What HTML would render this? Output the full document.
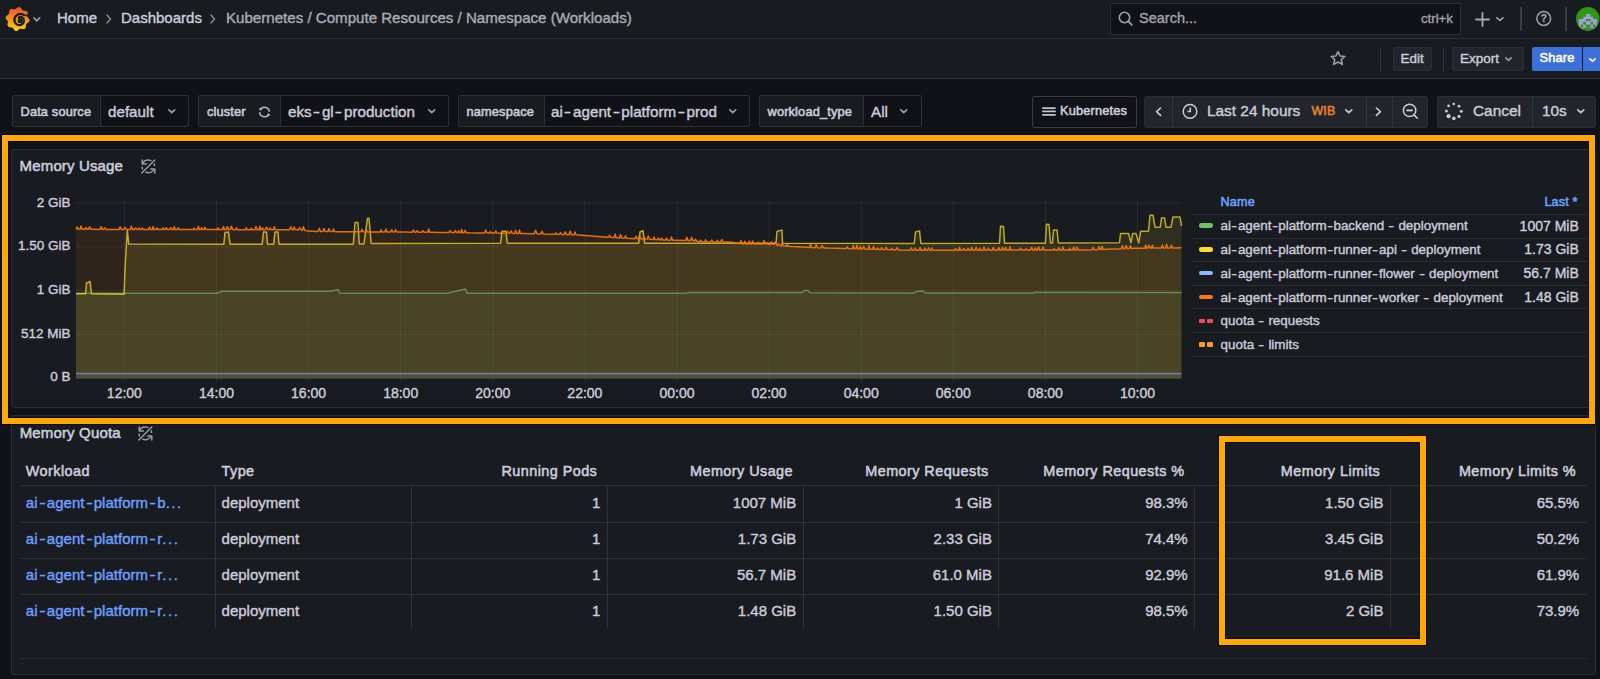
<!DOCTYPE html>
<html><head><meta charset="utf-8">
<style>
*{box-sizing:border-box;margin:0;padding:0}
html,body{width:1600px;height:679px;overflow:hidden;background:#111217;font-family:"Liberation Sans",sans-serif;color:#ccccdc}
.a{position:absolute}
.t{position:absolute;white-space:nowrap;line-height:1;-webkit-text-stroke:0.4px currentColor}
svg{position:absolute;overflow:visible}
.bar{position:absolute;left:0;width:1600px;background:#181b1f}
.var{position:absolute;top:95px;height:32px;border:1px solid #2d3036;border-radius:2px;background:#111217}
.lbl{position:absolute;left:0;top:0;bottom:0;background:#181b1f;border-right:1px solid #2d3036}
.panel{position:absolute;left:11px;width:1585px;background:#181b1f;border:1px solid #2a2d33;border-radius:3px}
.orange{position:absolute;border:6px solid #ffa900;box-shadow:0 0 0 1px rgba(0,4,30,0.6), inset 0 0 0 1px rgba(0,4,30,0.6)}
.t[style*="font-weight:bold"]{-webkit-text-stroke:0}
.t[style*="font-weight:600"]{font-weight:normal !important;-webkit-text-stroke:0.55px currentColor;letter-spacing:0.15px}
.hd{font-weight:bold;font-size:14.3px;color:#ccccdc}
.cell{font-size:15px;color:#ccccdc}
</style></head>
<body>
<!-- top bar -->
<div class="bar" style="top:0;height:39px;border-bottom:1px solid #2b2e34"></div>
<div class="bar" style="top:39px;height:40px;border-bottom:1px solid #2b2e34"></div>
<svg style="left:4px;top:5px" width="28" height="28" viewBox="0 0 28 28">
<defs><linearGradient id="lg" x1="0" y1="0" x2="0" y2="1"><stop offset="0" stop-color="#ee4f2a"/><stop offset="0.55" stop-color="#f7941d"/><stop offset="1" stop-color="#fcd20a"/></linearGradient></defs>
<path fill="url(#lg)" d="M25.14 14.00 L25.39 14.46 L25.55 14.94 L25.60 15.42 L25.54 15.89 L25.37 16.34 L25.09 16.76 L24.74 17.14 L24.32 17.48 L23.88 17.79 L23.45 18.08 L23.05 18.36 L22.70 18.64 L22.43 18.94 L22.22 19.28 L22.08 19.67 L22.00 20.10 L21.95 20.58 L21.91 21.10 L21.85 21.63 L21.76 22.16 L21.61 22.66 L21.38 23.11 L21.08 23.49 L20.71 23.78 L20.27 23.98 L19.78 24.08 L19.25 24.09 L18.72 24.04 L18.19 23.95 L17.68 23.85 L17.20 23.76 L16.76 23.72 L16.35 23.74 L15.96 23.83 L15.59 24.01 L15.22 24.25 L14.85 24.56 L14.46 24.89 L14.04 25.23 L13.60 25.54 L13.14 25.79 L12.66 25.95 L12.18 26.00 L11.71 25.94 L11.26 25.77 L10.84 25.49 L10.46 25.14 L10.12 24.72 L9.81 24.28 L9.52 23.85 L9.24 23.45 L8.96 23.10 L8.66 22.83 L8.32 22.62 L7.93 22.48 L7.50 22.40 L7.02 22.35 L6.50 22.31 L5.97 22.25 L5.44 22.16 L4.94 22.01 L4.49 21.78 L4.11 21.48 L3.82 21.11 L3.62 20.67 L3.52 20.18 L3.51 19.65 L3.56 19.12 L3.65 18.59 L3.75 18.08 L3.84 17.60 L3.88 17.16 L3.86 16.75 L3.77 16.36 L3.59 15.99 L3.35 15.62 L3.04 15.25 L2.71 14.86 L2.37 14.44 L2.06 14.00 L1.81 13.54 L1.65 13.06 L1.60 12.58 L1.66 12.11 L1.83 11.66 L2.11 11.24 L2.46 10.86 L2.88 10.52 L3.32 10.21 L3.75 9.92 L4.15 9.64 L4.50 9.36 L4.77 9.06 L4.98 8.72 L5.12 8.33 L5.20 7.90 L5.25 7.42 L5.29 6.90 L5.35 6.37 L5.44 5.84 L5.59 5.34 L5.82 4.89 L6.12 4.51 L6.49 4.22 L6.93 4.02 L7.42 3.92 L7.95 3.91 L8.48 3.96 L9.01 4.05 L9.52 4.15 L10.00 4.24 L10.44 4.28 L10.85 4.26 L11.24 4.17 L11.61 3.99 L11.98 3.75 L12.35 3.44 L12.74 3.11 L13.16 2.77 L13.60 2.46 L14.06 2.21 L14.54 2.05 L15.02 2.00 L15.49 2.06 L15.94 2.23 L16.36 2.51 L16.74 2.86 L17.08 3.28 L17.39 3.72 L17.68 4.15 L17.96 4.55 L18.24 4.90 L18.54 5.17 L18.88 5.38 L19.27 5.52 L19.70 5.60 L20.18 5.65 L20.70 5.69 L21.23 5.75 L21.76 5.84 L22.26 5.99 L22.71 6.22 L23.09 6.52 L23.38 6.89 L23.58 7.33 L23.68 7.82 L23.69 8.35 L23.64 8.88 L23.55 9.41 L23.45 9.92 L23.36 10.40 L23.32 10.84 L23.34 11.25 L23.43 11.64 L23.61 12.01 L23.85 12.38 L24.16 12.75 L24.49 13.14 L24.83 13.56 Z"/>
<path d="M20.14 10.24 L19.46 9.82 L18.74 9.48 L17.99 9.23 L17.22 9.08 L16.45 9.02 L15.68 9.06 L14.93 9.20 L14.21 9.42 L13.53 9.72 L12.90 10.10 L12.33 10.56 L11.82 11.07 L11.38 11.64 L11.02 12.25 L10.73 12.89 L10.54 13.56 L10.42 14.24 L10.39 14.91 L10.45 15.59 L10.58 16.24 L10.79 16.86 L11.08 17.45 L11.43 17.99 L11.83 18.48 L12.29 18.91 L12.80 19.27 L13.34 19.57 L13.90 19.79 L14.48 19.95 L15.07 20.03 L15.65 20.03 L16.23 19.97 L16.78 19.84 L17.31 19.64 L17.80 19.38 L18.25 19.07 L18.66 18.70 L19.01 18.30 L19.30 17.86 L19.54 17.40 L19.71 16.92 L19.82 16.42 L19.87 15.93 L19.86 15.44 L19.79 14.96 L19.66 14.50 L19.47 14.07 L19.24 13.67 L18.97 13.31 L18.66 12.99 L18.31 12.71 L17.95 12.48 L17.56 12.31 L17.16 12.18 L16.75 12.11 L16.35 12.09 L15.96 12.12 L15.57 12.20 L15.21 12.32 L14.87 12.48" fill="none" stroke="#181b1f" stroke-width="2.3" stroke-linecap="round"/>
<circle cx="16.1" cy="15.700000000000001" r="2.5" fill="#181b1f"/>
<path d="M21.5 9.6 L25.6 12.2" stroke="#181b1f" stroke-width="1.6"/>
</svg>
<svg style="left:33px;top:16.5px" width="7.5" height="4.5"><path d="M0.8 0.8 L3.75 3.9 L6.7 0.8" fill="none" stroke="#9fa0aa" stroke-width="1.6" stroke-linecap="round" stroke-linejoin="round"/></svg>
<div class="t" style="left:57px;top:10.4px;font-size:15px;color:#ccccdc;font-weight:normal;">Home</div>
<svg style="left:106px;top:14px" width="6" height="10"><path d="M1 1 L4.5 5 L1 9" fill="none" stroke="#8e8f99" stroke-width="1.4" stroke-linecap="round"/></svg>
<div class="t" style="left:121px;top:10.4px;font-size:15px;color:#ccccdc;font-weight:normal;">Dashboards</div>
<svg style="left:210px;top:14px" width="6" height="10"><path d="M1 1 L4.5 5 L1 9" fill="none" stroke="#8e8f99" stroke-width="1.4" stroke-linecap="round"/></svg>
<div class="t" style="left:226px;top:10.32px;font-size:15.1px;color:#a9aab6;font-weight:normal;">Kubernetes / Compute Resources / Namespace (Workloads)</div>
<div class="a" style="left:1110px;top:3px;width:351px;height:32px;background:#111217;border:1px solid #2d3036;border-radius:2px"></div>
<svg style="left:1118px;top:11px" width="16" height="16"><circle cx="6.5" cy="6.5" r="5.2" fill="none" stroke="#9fa0aa" stroke-width="1.6"/><path d="M10.3 10.3 L13.8 13.8" stroke="#9fa0aa" stroke-width="1.7" stroke-linecap="round"/></svg>
<div class="t" style="left:1139px;top:10.83px;font-size:14.5px;color:#9fa0aa;font-weight:normal;">Search...</div>
<div class="t" style="left:1421px;top:11.93px;font-size:13.2px;color:#9fa0aa;font-weight:normal;">ctrl+k</div>
<svg style="left:1475px;top:12px" width="15" height="15"><path d="M7.5 1 V14 M1 7.5 H14" stroke="#a9aab6" stroke-width="1.8" stroke-linecap="round"/></svg>
<svg style="left:1496.3px;top:17px" width="7.8" height="4"><path d="M0.8 0.8 L3.9 3.4 L7.0 0.8" fill="none" stroke="#9fa0aa" stroke-width="1.6" stroke-linecap="round" stroke-linejoin="round"/></svg>
<div class="a" style="left:1520.25px;top:7px;width:2px;height:24px;background:#393c43"></div>
<svg style="left:1535px;top:10px" width="18" height="18"><circle cx="8.75" cy="8.5" r="6.9" fill="none" stroke="#9fa0aa" stroke-width="1.5"/><text x="8.75" y="12.2" font-family="Liberation Sans" font-weight="bold" font-size="10" fill="#9fa0aa" stroke="#9fa0aa" stroke-width="0.3" text-anchor="middle">?</text></svg>
<div class="a" style="left:1565.25px;top:7px;width:2px;height:24px;background:#393c43"></div>
<svg style="left:1575.75px;top:7.25px" width="24" height="24" viewBox="0 0 24 24">
<defs><clipPath id="av"><circle cx="11.75" cy="11.75" r="11.75"/></clipPath></defs>
<g clip-path="url(#av)">
<rect x="0" y="0" width="24" height="24" fill="#2c9a0e"/>
<rect x="10" y="7" width="4.5" height="2.9" fill="#a99be6"/>
<rect x="7.25" y="9.75" width="9.75" height="2.4" fill="#a99be6"/>
<rect x="2.75" y="12" width="18" height="2.9" fill="#a99be6"/>
<rect x="10" y="12" width="4.5" height="1.9" fill="#2c9a0e"/>
<rect x="2.75" y="14.75" width="18" height="3.1" fill="#a99be6"/>
<rect x="7.25" y="14.75" width="2.75" height="3" fill="#2c9a0e"/>
<rect x="14.5" y="14.75" width="2.5" height="3" fill="#2c9a0e"/>
<rect x="2.75" y="17.75" width="18" height="3.1" fill="#a99be6"/>
<rect x="4.5" y="17.75" width="2.75" height="3" fill="#2c9a0e"/>
<rect x="10" y="17.75" width="4.5" height="3" fill="#2c9a0e"/>
<rect x="17" y="17.75" width="2.75" height="3" fill="#2c9a0e"/>
<rect x="2.75" y="20.75" width="20" height="4" fill="#a99be6"/>
<rect x="7.25" y="20.75" width="9.75" height="4" fill="#2c9a0e"/>
<rect x="2.5" y="0.25" width="1.75" height="2.25" fill="#a99be6"/>
<rect x="18" y="0.25" width="1.75" height="2.25" fill="#a99be6"/>
</g></svg>
<svg style="left:1329px;top:50px" width="18" height="17" viewBox="0 0 18 17"><path d="M9 1.6 L11.1 6 L15.8 6.5 L12.3 9.7 L13.3 14.4 L9 12 L4.7 14.4 L5.7 9.7 L2.2 6.5 L6.9 6 Z" fill="none" stroke="#9fa0aa" stroke-width="1.6" stroke-linejoin="round"/></svg>
<div class="a" style="left:1380px;top:47px;width:1.2px;height:24px;background:#33363c"></div>
<div class="a" style="left:1393px;top:47px;width:39px;height:24px;background:#22252b;border:1px solid #2a2d33;border-radius:2px"></div>
<div class="t" style="left:1400.5px;top:51.87px;font-size:13.5px;color:#ccccdc;font-weight:normal;">Edit</div>
<div class="a" style="left:1443px;top:47px;width:1.2px;height:24px;background:#33363c"></div>
<div class="a" style="left:1452px;top:47px;width:72px;height:24px;background:#22252b;border:1px solid #2a2d33;border-radius:2px"></div>
<div class="t" style="left:1460px;top:51.87px;font-size:13.5px;color:#ccccdc;font-weight:normal;">Export</div>
<svg style="left:1505px;top:57px" width="7" height="4"><path d="M0.8 0.8 L3.5 3.4 L6.2 0.8" fill="none" stroke="#9fa0aa" stroke-width="1.6" stroke-linecap="round" stroke-linejoin="round"/></svg>
<div class="a" style="left:1532px;top:47px;width:50px;height:24px;background:#3d71d9;border-radius:2px 0 0 2px"></div>
<div class="a" style="left:1583px;top:47px;width:17px;height:24px;background:#3d71d9"></div>
<div class="t" style="left:1539.5px;top:52.46px;font-size:12.8px;color:#ffffff;font-weight:600;">Share</div>
<svg style="left:1589px;top:57.5px" width="7" height="3.8"><path d="M0.8 0.8 L3.5 3.1999999999999997 L6.2 0.8" fill="none" stroke="#ffffff" stroke-width="1.6" stroke-linecap="round" stroke-linejoin="round"/></svg>
<div class="var" style="left:11.5px;width:177px"><div class="lbl" style="width:88.5px"></div></div><div class="t" style="left:20.5px;top:105.66px;font-size:12.8px;color:#ccccdc;font-weight:600;">Data source</div><div class="t" style="left:108px;top:103.53px;font-size:15.2px;color:#ccccdc;font-weight:normal;">default</div><svg style="left:167.5px;top:109px" width="7.5" height="4.2"><path d="M0.8 0.8 L3.75 3.6 L6.7 0.8" fill="none" stroke="#9fa0aa" stroke-width="1.6" stroke-linecap="round" stroke-linejoin="round"/></svg>
<div class="var" style="left:198px;width:250.5px"><div class="lbl" style="width:82px"></div></div><div class="t" style="left:207px;top:105.66px;font-size:12.8px;color:#ccccdc;font-weight:600;">cluster</div><svg style="left:258px;top:106px" width="13" height="12" viewBox="0 0 13 12"><path d="M2.72 3.04 A4.8 4.8 0 0 1 11.30 5.83" fill="none" stroke="#b5b6c2" stroke-width="1.5"/><path d="M10.28 8.96 A4.8 4.8 0 0 1 1.70 6.17" fill="none" stroke="#b5b6c2" stroke-width="1.5"/><circle cx="2.6" cy="3.1" r="1.4" fill="#b5b6c2"/><circle cx="10.4" cy="8.9" r="1.4" fill="#b5b6c2"/></svg><div class="t" style="left:288px;top:103.53px;font-size:15.2px;color:#ccccdc;font-weight:normal;">eks<span style="display:inline-block;transform:scaleX(1.45);margin:0 2.6px">-</span>gl<span style="display:inline-block;transform:scaleX(1.45);margin:0 2.6px">-</span>production</div><svg style="left:427.5px;top:109px" width="7.5" height="4.2"><path d="M0.8 0.8 L3.75 3.6 L6.7 0.8" fill="none" stroke="#9fa0aa" stroke-width="1.6" stroke-linecap="round" stroke-linejoin="round"/></svg>
<div class="var" style="left:457.5px;width:292.5px"><div class="lbl" style="width:86.5px"></div></div><div class="t" style="left:466.5px;top:105.66px;font-size:12.8px;color:#ccccdc;font-weight:600;">namespace</div><div class="t" style="left:551px;top:103.53px;font-size:15.2px;color:#ccccdc;font-weight:normal;">ai<span style="display:inline-block;transform:scaleX(1.45);margin:0 2.6px">-</span>agent<span style="display:inline-block;transform:scaleX(1.45);margin:0 2.6px">-</span>platform<span style="display:inline-block;transform:scaleX(1.45);margin:0 2.6px">-</span>prod</div><svg style="left:729px;top:109px" width="7.5" height="4.2"><path d="M0.8 0.8 L3.75 3.6 L6.7 0.8" fill="none" stroke="#9fa0aa" stroke-width="1.6" stroke-linecap="round" stroke-linejoin="round"/></svg>
<div class="var" style="left:758.5px;width:163.5px"><div class="lbl" style="width:104.5px"></div></div><div class="t" style="left:767.5px;top:105.66px;font-size:12.8px;color:#ccccdc;font-weight:600;">workload_type</div><div class="t" style="left:871px;top:103.53px;font-size:15.2px;color:#ccccdc;font-weight:normal;">All</div><svg style="left:900px;top:109px" width="7.5" height="4.2"><path d="M0.8 0.8 L3.75 3.6 L6.7 0.8" fill="none" stroke="#9fa0aa" stroke-width="1.6" stroke-linecap="round" stroke-linejoin="round"/></svg>
<div class="a" style="left:1031.5px;top:95.5px;width:105.5px;height:32px;border:1px solid #3a3d44;border-radius:2px;background:#111217"></div>
<svg style="left:1041.5px;top:107px" width="14" height="9"><path d="M0.9 1.1 H13.1 M0.9 4.4 H13.1 M0.9 7.8 H13.1" stroke="#c4c4d2" stroke-width="1.7" stroke-linecap="round"/></svg>
<div class="t" style="left:1060px;top:105.16px;font-size:12.8px;color:#ccccdc;font-weight:600;">Kubernetes</div>
<div class="a" style="left:1144px;top:95.5px;width:284px;height:32px;background:#22252b;border:1px solid #2a2d33;border-radius:2px"></div>
<div class="a" style="left:1172px;top:96px;width:1px;height:31px;background:#33363c"></div>
<div class="a" style="left:1365.5px;top:96px;width:1px;height:31px;background:#33363c"></div>
<div class="a" style="left:1392px;top:96px;width:1px;height:31px;background:#33363c"></div>
<svg style="left:1155px;top:107px" width="7" height="10"><path d="M5.6 1 L1.6 4.7 L5.6 8.4" fill="none" stroke="#ccccdc" stroke-width="1.6" stroke-linecap="round" stroke-linejoin="round"/></svg>
<svg style="left:1182px;top:103px" width="17" height="17"><circle cx="8" cy="8.4" r="6.8" fill="none" stroke="#ccccdc" stroke-width="1.5"/><path d="M8.3 4.5 V8.5 H5.4" fill="none" stroke="#ccccdc" stroke-width="1.5"/></svg>
<div class="t" style="left:1207px;top:102.56px;font-size:15.4px;color:#ccccdc;font-weight:normal;">Last 24 hours</div>
<div class="t" style="left:1311.5px;top:104.9px;font-size:12.4px;color:#e8832a;font-weight:600;">WIB</div>
<svg style="left:1344.5px;top:109px" width="7.6" height="4.2"><path d="M0.8 0.8 L3.8 3.6 L6.8 0.8" fill="none" stroke="#ccccdc" stroke-width="1.6" stroke-linecap="round" stroke-linejoin="round"/></svg>
<svg style="left:1375px;top:107px" width="7" height="10"><path d="M1.4 1 L5.4 4.7 L1.4 8.4" fill="none" stroke="#ccccdc" stroke-width="1.6" stroke-linecap="round" stroke-linejoin="round"/></svg>
<svg style="left:1401px;top:102px" width="18" height="18"><circle cx="8.6" cy="8.4" r="6.2" fill="none" stroke="#ccccdc" stroke-width="1.5"/><path d="M5.4 8.4 H11.8" stroke="#ccccdc" stroke-width="1.9"/><path d="M13 12.9 L16.3 16.2" stroke="#ccccdc" stroke-width="1.6" stroke-linecap="round"/></svg>
<div class="a" style="left:1436.5px;top:95.5px;width:159.5px;height:32px;background:#22252b;border:1px solid #2a2d33;border-radius:2px"></div>
<div class="a" style="left:1531.5px;top:96px;width:1px;height:31px;background:#33363c"></div>
<svg style="left:1440px;top:100px" width="26" height="24"><circle cx="13.75" cy="4.0" r="1.3" fill="#c8c8d6"/><circle cx="19" cy="6.200000000000003" r="1.4" fill="#c8c8d6"/><circle cx="21.299999999999955" cy="11.299999999999997" r="1.5" fill="#c8c8d6"/><circle cx="19" cy="16.400000000000006" r="1.6" fill="#c8c8d6"/><circle cx="13.900000000000091" cy="18.400000000000006" r="1.8" fill="#c8c8d6"/><circle cx="8.599999999999909" cy="16.200000000000003" r="2.1" fill="#c8c8d6"/><circle cx="6.400000000000091" cy="11.099999999999994" r="1.5" fill="#c8c8d6"/><circle cx="8.599999999999909" cy="5.900000000000006" r="1.4" fill="#c8c8d6"/></svg>
<div class="t" style="left:1473px;top:102.56px;font-size:15.4px;color:#ccccdc;font-weight:normal;">Cancel</div>
<div class="t" style="left:1542px;top:102.56px;font-size:15.4px;color:#ccccdc;font-weight:normal;">10s</div>
<svg style="left:1576.5px;top:109px" width="7.6" height="4.2"><path d="M0.8 0.8 L3.8 3.6 L6.8 0.8" fill="none" stroke="#ccccdc" stroke-width="1.6" stroke-linecap="round" stroke-linejoin="round"/></svg>
<div class="panel" style="top:149px;height:258.5px"></div>
<div class="panel" style="top:415px;height:260px"></div>
<div class="t" style="left:19.6px;top:158.3px;font-size:15px;color:#ccccdc;font-weight:600;">Memory Usage</div>
<svg style="left:140.8px;top:158.5px" width="15" height="15" viewBox="0 0 15 15">
<path d="M1.59 4.64 A6.3 6.3 0 0 1 13.59 6.97" fill="none" stroke="#9a9ba6" stroke-width="1.5"/>
<path d="M13.01 9.96 A6.3 6.3 0 0 1 1.01 7.63" fill="none" stroke="#9a9ba6" stroke-width="1.5"/>
<path d="M1.2 0.9 V5.0 H5.4" fill="none" stroke="#9a9ba6" stroke-width="1.5" stroke-linecap="round" stroke-linejoin="round"/>
<path d="M13.8 14.1 V10 H9.6" fill="none" stroke="#9a9ba6" stroke-width="1.5" stroke-linecap="round" stroke-linejoin="round"/>
<path d="M0.8 14 L13.8 1" stroke="#181b1f" stroke-width="3.6"/><path d="M0.8 14 L13.8 1" stroke="#9a9ba6" stroke-width="1.5" stroke-linecap="round"/>
</svg>
<svg style="left:0;top:0" width="1600" height="679"><path d="M76.0 203.00 H1181.5" stroke="rgba(204,204,220,0.09)" stroke-width="1"/><path d="M76.0 246.88 H1181.5" stroke="rgba(204,204,220,0.09)" stroke-width="1"/><path d="M76.0 290.75 H1181.5" stroke="rgba(204,204,220,0.09)" stroke-width="1"/><path d="M76.0 334.62 H1181.5" stroke="rgba(204,204,220,0.09)" stroke-width="1"/><path d="M76.0 378.50 H1181.5" stroke="rgba(204,204,220,0.09)" stroke-width="1"/><path d="M124.40 199 V382" stroke="rgba(204,204,220,0.09)" stroke-width="1"/><path d="M216.50 199 V382" stroke="rgba(204,204,220,0.09)" stroke-width="1"/><path d="M308.60 199 V382" stroke="rgba(204,204,220,0.09)" stroke-width="1"/><path d="M400.70 199 V382" stroke="rgba(204,204,220,0.09)" stroke-width="1"/><path d="M492.80 199 V382" stroke="rgba(204,204,220,0.09)" stroke-width="1"/><path d="M584.90 199 V382" stroke="rgba(204,204,220,0.09)" stroke-width="1"/><path d="M677.00 199 V382" stroke="rgba(204,204,220,0.09)" stroke-width="1"/><path d="M769.10 199 V382" stroke="rgba(204,204,220,0.09)" stroke-width="1"/><path d="M861.20 199 V382" stroke="rgba(204,204,220,0.09)" stroke-width="1"/><path d="M953.30 199 V382" stroke="rgba(204,204,220,0.09)" stroke-width="1"/><path d="M1045.40 199 V382" stroke="rgba(204,204,220,0.09)" stroke-width="1"/><path d="M1137.50 199 V382" stroke="rgba(204,204,220,0.09)" stroke-width="1"/><path d="M76.0 229.3 L77.2 226.9 L78.5 229.3 L80.0 229.3 L81.1 226.1 L82.1 229.3 L84.9 229.3 L86.0 227.5 L87.0 229.3 L88.4 229.3 L89.7 226.7 L90.9 229.3 L93.8 229.3 L100.0 229.4 L101.2 226.6 L102.4 229.4 L103.6 229.4 L104.8 227.9 L106.1 229.4 L108.9 229.4 L114.5 229.4 L119.0 229.4 L120.2 226.9 L121.3 229.4 L123.7 229.4 L125.0 227.4 L126.3 229.4 L130.3 229.4 L131.4 226.2 L132.6 229.4 L134.5 229.4 L135.6 228.0 L136.7 229.4 L138.0 229.4 L139.0 227.8 L139.9 229.4 L141.1 229.4 L142.2 228.0 L143.4 229.4 L145.0 229.5 L148.4 229.5 L149.5 227.1 L150.6 229.5 L152.2 229.5 L153.2 226.6 L154.1 229.5 L156.1 229.5 L157.1 228.0 L158.1 229.5 L161.9 229.5 L163.0 227.8 L164.2 229.5 L165.2 229.5 L166.3 227.7 L167.4 229.5 L169.7 229.5 L170.9 227.7 L172.0 229.5 L173.4 229.5 L174.3 226.7 L175.1 229.5 L177.4 229.5 L178.3 227.7 L179.3 229.5 L183.2 229.5 L188.6 229.6 L193.3 229.6 L194.2 228.1 L195.0 229.6 L197.4 229.6 L198.4 226.3 L199.4 229.6 L200.6 229.6 L201.7 227.7 L202.8 229.6 L203.9 229.6 L205.0 227.4 L206.1 229.6 L207.5 229.6 L217.1 229.6 L218.0 227.8 L218.9 229.6 L222.6 229.6 L223.5 226.4 L224.5 229.6 L226.0 229.6 L227.3 226.6 L228.6 229.6 L230.2 229.6 L231.4 226.2 L232.6 229.6 L235.4 229.7 L236.5 228.0 L237.6 229.7 L239.3 229.7 L245.5 229.7 L246.3 227.6 L247.2 229.7 L250.4 229.7 L251.3 228.1 L252.2 229.7 L254.9 229.7 L256.0 226.4 L257.1 229.7 L259.0 229.7 L259.9 226.3 L260.8 229.7 L261.8 229.7 L262.6 227.8 L263.5 229.7 L265.3 229.7 L266.6 227.2 L267.9 229.7 L269.2 229.7 L270.2 228.0 L271.2 229.7 L273.2 229.7 L274.3 226.7 L275.3 229.7 L279.2 229.8 L289.5 229.8 L290.8 226.8 L292.1 229.8 L293.2 229.8 L294.2 227.0 L295.3 229.8 L298.4 229.8 L299.7 227.7 L301.0 229.8 L302.3 230.2 L303.4 226.8 L304.6 230.2 L307.7 231.1 L318.0 231.6 L319.3 228.2 L320.5 231.6 L322.8 231.6 L324.0 228.4 L325.2 231.6 L327.9 231.6 L328.9 228.8 L329.9 231.6 L332.7 231.6 L333.5 228.9 L334.4 231.6 L337.3 231.7 L347.3 231.7 L353.4 231.8 L361.1 231.8 L362.1 229.3 L363.2 231.8 L365.1 231.9 L366.3 229.9 L367.4 231.9 L369.9 231.9 L380.3 231.9 L381.1 229.7 L382.0 231.9 L384.8 232.0 L385.9 229.1 L386.9 232.0 L390.6 232.0 L391.7 229.9 L392.8 232.0 L394.4 232.0 L395.6 229.7 L396.8 232.0 L400.6 232.1 L406.6 232.1 L412.2 232.2 L413.4 230.0 L414.7 232.2 L415.8 232.2 L417.1 230.6 L418.4 232.2 L421.8 232.2 L422.9 230.6 L423.9 232.2 L427.7 232.3 L428.7 229.0 L429.7 232.3 L432.2 232.3 L441.0 232.4 L449.0 232.5 L450.1 230.5 L451.2 232.5 L454.2 232.6 L455.4 230.5 L456.6 232.6 L457.7 232.6 L458.7 230.9 L459.7 232.6 L460.8 232.7 L461.7 229.4 L462.6 232.7 L464.0 232.7 L465.2 230.3 L466.3 232.7 L469.2 232.8 L479.9 232.9 L484.5 233.0 L485.7 230.0 L486.9 233.0 L489.5 233.0 L490.4 231.6 L491.3 233.0 L494.6 233.1 L495.8 230.9 L497.0 233.1 L500.7 233.2 L502.0 231.6 L503.3 233.2 L506.4 233.3 L507.7 231.4 L508.9 233.3 L509.9 233.3 L511.1 230.7 L512.2 233.3 L514.7 233.4 L515.7 230.2 L516.6 233.4 L518.6 233.4 L519.5 229.9 L520.3 233.4 L523.9 233.5 L534.3 233.7 L535.6 230.3 L536.9 233.7 L540.8 233.9 L542.0 231.3 L543.2 233.9 L545.2 234.1 L555.0 234.3 L556.0 232.9 L557.0 234.3 L559.2 234.4 L560.5 232.6 L561.7 234.4 L564.0 234.6 L565.2 231.7 L566.5 234.6 L568.9 234.7 L570.2 231.1 L571.4 234.7 L574.0 234.8 L575.0 231.9 L576.0 234.8 L579.6 235.0 L588.2 235.7 L594.7 236.2 L604.3 237.0 L608.6 237.3 L609.6 235.2 L610.6 237.3 L614.2 237.6 L615.1 234.2 L616.0 237.6 L619.5 238.0 L620.6 234.4 L621.6 238.0 L624.4 238.2 L625.5 235.7 L626.6 238.2 L627.7 238.3 L634.8 238.7 L635.9 236.2 L637.1 238.7 L638.3 238.8 L639.5 235.4 L640.7 238.8 L642.9 239.1 L643.9 237.1 L645.0 239.1 L647.0 239.3 L648.3 235.9 L649.5 239.3 L653.3 239.6 L654.1 237.1 L655.0 239.6 L657.3 239.8 L658.4 238.2 L659.6 239.8 L660.7 240.0 L661.6 238.2 L662.5 240.0 L665.6 240.1 L666.6 238.0 L667.5 240.1 L670.4 240.2 L671.5 236.9 L672.6 240.2 L675.8 240.3 L685.8 240.5 L686.9 237.3 L688.0 240.5 L690.6 240.6 L691.7 237.3 L692.8 240.6 L694.4 241.0 L695.5 239.1 L696.6 241.0 L699.3 241.9 L700.6 240.2 L701.8 241.9 L704.7 241.9 L705.7 239.8 L706.6 241.9 L710.4 241.9 L711.7 240.1 L713.0 241.9 L716.7 242.0 L717.5 240.3 L718.4 242.0 L720.5 242.0 L721.8 239.6 L723.1 242.0 L725.7 242.0 L730.3 242.0 L739.7 243.8 L741.0 240.4 L742.3 243.8 L743.6 243.9 L744.8 241.3 L746.0 243.9 L748.5 243.9 L749.4 241.0 L750.3 243.9 L751.5 244.0 L752.6 240.9 L753.7 244.0 L757.4 244.0 L758.3 242.2 L759.2 244.0 L762.7 244.1 L764.0 240.5 L765.3 244.1 L766.5 244.2 L767.4 242.6 L768.2 244.2 L770.4 244.2 L771.4 241.9 L772.4 244.2 L774.0 244.3 L775.1 242.1 L776.2 244.3 L777.4 245.3 L778.4 243.5 L779.4 245.3 L781.4 245.8 L782.3 243.1 L783.1 245.8 L786.5 246.2 L787.4 244.1 L788.2 246.2 L791.7 246.5 L802.0 247.1 L809.6 247.4 L810.5 244.3 L811.4 247.4 L815.1 247.7 L816.3 244.7 L817.5 247.7 L821.0 247.9 L822.2 245.6 L823.5 247.9 L827.1 248.1 L836.2 248.3 L842.5 248.4 L846.1 248.5 L847.3 246.9 L848.5 248.5 L852.5 248.7 L853.3 245.3 L854.2 248.7 L856.0 248.8 L856.9 245.3 L857.9 248.8 L859.5 248.9 L860.4 246.6 L861.3 248.9 L862.5 249.0 L863.7 246.2 L864.8 249.0 L868.1 249.2 L868.9 245.6 L869.7 249.2 L872.6 249.3 L873.5 246.3 L874.4 249.3 L876.7 249.4 L877.6 247.9 L878.5 249.4 L880.6 249.5 L881.5 247.5 L882.5 249.5 L885.1 249.6 L886.2 247.3 L887.3 249.6 L890.8 249.8 L891.8 248.2 L892.8 249.8 L895.8 249.9 L897.0 247.7 L898.3 249.9 L900.5 250.1 L910.3 250.2 L911.4 247.9 L912.4 250.2 L914.3 250.2 L915.2 248.0 L916.2 250.2 L919.1 250.2 L920.1 247.6 L921.0 250.2 L924.2 250.2 L925.0 248.1 L925.8 250.2 L927.5 250.2 L928.6 247.9 L929.8 250.2 L930.9 250.2 L931.9 248.1 L932.9 250.2 L935.7 250.2 L941.2 250.2 L946.0 250.2 L951.0 250.2 L954.4 250.2 L955.7 248.5 L957.0 250.2 L958.7 250.2 L959.5 247.2 L960.3 250.2 L962.6 250.2 L963.8 248.5 L965.1 250.2 L967.1 250.2 L968.1 248.4 L969.1 250.2 L970.5 250.2 L971.7 247.4 L972.8 250.2 L974.9 250.2 L976.1 247.1 L977.3 250.2 L978.7 250.2 L979.6 248.1 L980.4 250.2 L982.9 250.2 L984.0 247.0 L985.1 250.2 L987.2 250.2 L988.3 248.2 L989.5 250.2 L992.2 250.2 L993.3 247.4 L994.4 250.2 L997.7 250.1 L998.8 247.6 L999.9 250.1 L1001.5 250.1 L1002.6 247.2 L1003.7 250.1 L1004.8 250.1 L1005.6 247.4 L1006.5 250.1 L1009.1 250.1 L1010.0 246.7 L1010.8 250.1 L1012.5 250.1 L1019.4 250.1 L1020.6 248.0 L1021.8 250.1 L1025.3 250.1 L1026.1 248.6 L1027.0 250.1 L1030.4 250.1 L1031.6 247.4 L1032.8 250.1 L1034.4 250.1 L1035.3 247.9 L1036.2 250.1 L1037.6 250.1 L1038.7 246.9 L1039.8 250.1 L1041.7 250.1 L1042.9 247.1 L1044.1 250.1 L1045.7 250.1 L1053.3 250.1 L1054.2 248.5 L1055.0 250.1 L1057.7 250.1 L1058.9 247.6 L1060.0 250.1 L1061.9 250.1 L1062.7 247.0 L1063.6 250.1 L1065.2 250.1 L1068.9 250.1 L1069.7 248.1 L1070.6 250.1 L1072.7 250.1 L1073.7 247.1 L1074.7 250.1 L1076.0 250.1 L1077.1 247.1 L1078.2 250.1 L1081.9 250.0 L1092.2 249.7 L1093.1 247.3 L1094.1 249.7 L1098.0 249.5 L1099.0 246.5 L1100.1 249.5 L1101.3 249.4 L1102.1 246.2 L1103.0 249.4 L1106.0 249.3 L1115.4 249.0 L1121.3 248.8 L1122.4 245.6 L1123.5 248.8 L1125.0 248.7 L1126.2 245.6 L1127.5 248.7 L1129.3 248.5 L1130.4 245.9 L1131.5 248.5 L1135.4 248.3 L1144.8 248.2 L1145.7 245.0 L1146.5 248.2 L1147.7 248.1 L1149.0 245.1 L1150.2 248.1 L1151.5 248.1 L1152.4 245.3 L1153.2 248.1 L1156.5 248.0 L1161.4 248.0 L1162.4 244.9 L1163.4 248.0 L1165.5 248.0 L1166.6 244.4 L1167.7 248.0 L1170.2 247.9 L1171.4 245.3 L1172.5 247.9 L1175.7 247.9 L1181.5 247.8 L1181.5 378.5 L76.0 378.5 Z" fill="#ff780a" fill-opacity="0.1"/><path d="M76.0 293.8 L85.6 293.8 L86.5 283.0 L88.0 282.5 L90.0 281.4 L91.5 293.8 L124.1 294.2 L125.1 267.1 L127.3 230.6 L128.8 244.1 L223.8 244.2 L225.0 232.5 L228.5 231.9 L230.0 244.2 L262.2 244.2 L263.5 232.0 L266.5 232.0 L267.5 244.2 L273.7 244.2 L275.0 232.0 L278.0 232.0 L279.0 244.2 L353.3 244.2 L355.0 222.6 L358.0 222.6 L359.3 244.0 L363.9 244.0 L367.5 218.2 L369.0 218.2 L371.2 243.5 L500.6 243.2 L502.0 231.2 L506.0 231.2 L507.3 243.2 L638.7 243.2 L640.0 232.0 L643.0 230.6 L644.7 243.2 L776.0 243.2 L777.0 231.5 L782.0 229.9 L782.5 243.2 L914.3 243.4 L915.5 232.0 L919.5 230.9 L920.9 243.4 L999.5 243.2 L1000.5 226.2 L1003.5 226.5 L1004.6 243.2 L1045.4 243.2 L1046.5 224.3 L1049.0 224.5 L1050.5 243.0 L1052.5 243.0 L1053.5 230.0 L1057.0 229.9 L1058.4 243.0 L1119.5 242.7 L1120.5 233.6 L1128.6 233.6 L1131.0 242.7 L1132.7 233.6 L1136.0 233.6 L1138.8 242.7 L1140.7 231.2 L1148.5 231.2 L1150.0 215.2 L1153.0 215.2 L1155.0 227.2 L1160.3 227.2 L1161.5 218.0 L1164.6 218.0 L1166.0 227.2 L1171.0 227.2 L1173.0 217.0 L1180.0 217.0 L1181.5 226.0 L1181.5 378.5 L76.0 378.5 Z" fill="#fade2a" fill-opacity="0.1"/><path d="M76.0 293.3 L217.0 293.3 L222.0 291.2 L330.7 291.2 L338.0 289.6 L340.0 293.3 L446.9 293.3 L465.5 288.9 L467.0 293.3 L686.6 293.3 L688.0 292.5 L802.6 292.5 L804.0 290.6 L808.0 290.6 L810.0 292.8 L914.0 293.1 L916.0 291.5 L923.0 291.0 L925.0 293.1 L1033.0 293.1 L1034.0 292.3 L1181.5 292.4 L1181.5 378.5 L76.0 378.5 Z" fill="#73bf69" fill-opacity="0.1"/><path d="M76.0 373.6 L1181.5 373.6 L1181.5 378.5 L76.0 378.5 Z" fill="#8ab8ff" fill-opacity="0.1"/><path d="M76.0 293.3 L217.0 293.3 L222.0 291.2 L330.7 291.2 L338.0 289.6 L340.0 293.3 L446.9 293.3 L465.5 288.9 L467.0 293.3 L686.6 293.3 L688.0 292.5 L802.6 292.5 L804.0 290.6 L808.0 290.6 L810.0 292.8 L914.0 293.1 L916.0 291.5 L923.0 291.0 L925.0 293.1 L1033.0 293.1 L1034.0 292.3 L1181.5 292.4" fill="none" stroke="#73bf69" stroke-opacity="0.62" stroke-width="1.5" stroke-linejoin="round"/><path d="M76.0 293.8 L85.6 293.8 L86.5 283.0 L88.0 282.5 L90.0 281.4 L91.5 293.8 L124.1 294.2 L125.1 267.1 L127.3 230.6 L128.8 244.1 L223.8 244.2 L225.0 232.5 L228.5 231.9 L230.0 244.2 L262.2 244.2 L263.5 232.0 L266.5 232.0 L267.5 244.2 L273.7 244.2 L275.0 232.0 L278.0 232.0 L279.0 244.2 L353.3 244.2 L355.0 222.6 L358.0 222.6 L359.3 244.0 L363.9 244.0 L367.5 218.2 L369.0 218.2 L371.2 243.5 L500.6 243.2 L502.0 231.2 L506.0 231.2 L507.3 243.2 L638.7 243.2 L640.0 232.0 L643.0 230.6 L644.7 243.2 L776.0 243.2 L777.0 231.5 L782.0 229.9 L782.5 243.2 L914.3 243.4 L915.5 232.0 L919.5 230.9 L920.9 243.4 L999.5 243.2 L1000.5 226.2 L1003.5 226.5 L1004.6 243.2 L1045.4 243.2 L1046.5 224.3 L1049.0 224.5 L1050.5 243.0 L1052.5 243.0 L1053.5 230.0 L1057.0 229.9 L1058.4 243.0 L1119.5 242.7 L1120.5 233.6 L1128.6 233.6 L1131.0 242.7 L1132.7 233.6 L1136.0 233.6 L1138.8 242.7 L1140.7 231.2 L1148.5 231.2 L1150.0 215.2 L1153.0 215.2 L1155.0 227.2 L1160.3 227.2 L1161.5 218.0 L1164.6 218.0 L1166.0 227.2 L1171.0 227.2 L1173.0 217.0 L1180.0 217.0 L1181.5 226.0" fill="none" stroke="#fade2a" stroke-opacity="0.72" stroke-width="1.5" stroke-linejoin="round"/><path d="M76.0 373.6 L1181.5 373.6" fill="none" stroke="#8ab8ff" stroke-opacity="0.55" stroke-width="1.5" stroke-linejoin="round"/><path d="M76.0 229.3 L77.2 226.9 L78.5 229.3 L80.0 229.3 L81.1 226.1 L82.1 229.3 L84.9 229.3 L86.0 227.5 L87.0 229.3 L88.4 229.3 L89.7 226.7 L90.9 229.3 L93.8 229.3 L100.0 229.4 L101.2 226.6 L102.4 229.4 L103.6 229.4 L104.8 227.9 L106.1 229.4 L108.9 229.4 L114.5 229.4 L119.0 229.4 L120.2 226.9 L121.3 229.4 L123.7 229.4 L125.0 227.4 L126.3 229.4 L130.3 229.4 L131.4 226.2 L132.6 229.4 L134.5 229.4 L135.6 228.0 L136.7 229.4 L138.0 229.4 L139.0 227.8 L139.9 229.4 L141.1 229.4 L142.2 228.0 L143.4 229.4 L145.0 229.5 L148.4 229.5 L149.5 227.1 L150.6 229.5 L152.2 229.5 L153.2 226.6 L154.1 229.5 L156.1 229.5 L157.1 228.0 L158.1 229.5 L161.9 229.5 L163.0 227.8 L164.2 229.5 L165.2 229.5 L166.3 227.7 L167.4 229.5 L169.7 229.5 L170.9 227.7 L172.0 229.5 L173.4 229.5 L174.3 226.7 L175.1 229.5 L177.4 229.5 L178.3 227.7 L179.3 229.5 L183.2 229.5 L188.6 229.6 L193.3 229.6 L194.2 228.1 L195.0 229.6 L197.4 229.6 L198.4 226.3 L199.4 229.6 L200.6 229.6 L201.7 227.7 L202.8 229.6 L203.9 229.6 L205.0 227.4 L206.1 229.6 L207.5 229.6 L217.1 229.6 L218.0 227.8 L218.9 229.6 L222.6 229.6 L223.5 226.4 L224.5 229.6 L226.0 229.6 L227.3 226.6 L228.6 229.6 L230.2 229.6 L231.4 226.2 L232.6 229.6 L235.4 229.7 L236.5 228.0 L237.6 229.7 L239.3 229.7 L245.5 229.7 L246.3 227.6 L247.2 229.7 L250.4 229.7 L251.3 228.1 L252.2 229.7 L254.9 229.7 L256.0 226.4 L257.1 229.7 L259.0 229.7 L259.9 226.3 L260.8 229.7 L261.8 229.7 L262.6 227.8 L263.5 229.7 L265.3 229.7 L266.6 227.2 L267.9 229.7 L269.2 229.7 L270.2 228.0 L271.2 229.7 L273.2 229.7 L274.3 226.7 L275.3 229.7 L279.2 229.8 L289.5 229.8 L290.8 226.8 L292.1 229.8 L293.2 229.8 L294.2 227.0 L295.3 229.8 L298.4 229.8 L299.7 227.7 L301.0 229.8 L302.3 230.2 L303.4 226.8 L304.6 230.2 L307.7 231.1 L318.0 231.6 L319.3 228.2 L320.5 231.6 L322.8 231.6 L324.0 228.4 L325.2 231.6 L327.9 231.6 L328.9 228.8 L329.9 231.6 L332.7 231.6 L333.5 228.9 L334.4 231.6 L337.3 231.7 L347.3 231.7 L353.4 231.8 L361.1 231.8 L362.1 229.3 L363.2 231.8 L365.1 231.9 L366.3 229.9 L367.4 231.9 L369.9 231.9 L380.3 231.9 L381.1 229.7 L382.0 231.9 L384.8 232.0 L385.9 229.1 L386.9 232.0 L390.6 232.0 L391.7 229.9 L392.8 232.0 L394.4 232.0 L395.6 229.7 L396.8 232.0 L400.6 232.1 L406.6 232.1 L412.2 232.2 L413.4 230.0 L414.7 232.2 L415.8 232.2 L417.1 230.6 L418.4 232.2 L421.8 232.2 L422.9 230.6 L423.9 232.2 L427.7 232.3 L428.7 229.0 L429.7 232.3 L432.2 232.3 L441.0 232.4 L449.0 232.5 L450.1 230.5 L451.2 232.5 L454.2 232.6 L455.4 230.5 L456.6 232.6 L457.7 232.6 L458.7 230.9 L459.7 232.6 L460.8 232.7 L461.7 229.4 L462.6 232.7 L464.0 232.7 L465.2 230.3 L466.3 232.7 L469.2 232.8 L479.9 232.9 L484.5 233.0 L485.7 230.0 L486.9 233.0 L489.5 233.0 L490.4 231.6 L491.3 233.0 L494.6 233.1 L495.8 230.9 L497.0 233.1 L500.7 233.2 L502.0 231.6 L503.3 233.2 L506.4 233.3 L507.7 231.4 L508.9 233.3 L509.9 233.3 L511.1 230.7 L512.2 233.3 L514.7 233.4 L515.7 230.2 L516.6 233.4 L518.6 233.4 L519.5 229.9 L520.3 233.4 L523.9 233.5 L534.3 233.7 L535.6 230.3 L536.9 233.7 L540.8 233.9 L542.0 231.3 L543.2 233.9 L545.2 234.1 L555.0 234.3 L556.0 232.9 L557.0 234.3 L559.2 234.4 L560.5 232.6 L561.7 234.4 L564.0 234.6 L565.2 231.7 L566.5 234.6 L568.9 234.7 L570.2 231.1 L571.4 234.7 L574.0 234.8 L575.0 231.9 L576.0 234.8 L579.6 235.0 L588.2 235.7 L594.7 236.2 L604.3 237.0 L608.6 237.3 L609.6 235.2 L610.6 237.3 L614.2 237.6 L615.1 234.2 L616.0 237.6 L619.5 238.0 L620.6 234.4 L621.6 238.0 L624.4 238.2 L625.5 235.7 L626.6 238.2 L627.7 238.3 L634.8 238.7 L635.9 236.2 L637.1 238.7 L638.3 238.8 L639.5 235.4 L640.7 238.8 L642.9 239.1 L643.9 237.1 L645.0 239.1 L647.0 239.3 L648.3 235.9 L649.5 239.3 L653.3 239.6 L654.1 237.1 L655.0 239.6 L657.3 239.8 L658.4 238.2 L659.6 239.8 L660.7 240.0 L661.6 238.2 L662.5 240.0 L665.6 240.1 L666.6 238.0 L667.5 240.1 L670.4 240.2 L671.5 236.9 L672.6 240.2 L675.8 240.3 L685.8 240.5 L686.9 237.3 L688.0 240.5 L690.6 240.6 L691.7 237.3 L692.8 240.6 L694.4 241.0 L695.5 239.1 L696.6 241.0 L699.3 241.9 L700.6 240.2 L701.8 241.9 L704.7 241.9 L705.7 239.8 L706.6 241.9 L710.4 241.9 L711.7 240.1 L713.0 241.9 L716.7 242.0 L717.5 240.3 L718.4 242.0 L720.5 242.0 L721.8 239.6 L723.1 242.0 L725.7 242.0 L730.3 242.0 L739.7 243.8 L741.0 240.4 L742.3 243.8 L743.6 243.9 L744.8 241.3 L746.0 243.9 L748.5 243.9 L749.4 241.0 L750.3 243.9 L751.5 244.0 L752.6 240.9 L753.7 244.0 L757.4 244.0 L758.3 242.2 L759.2 244.0 L762.7 244.1 L764.0 240.5 L765.3 244.1 L766.5 244.2 L767.4 242.6 L768.2 244.2 L770.4 244.2 L771.4 241.9 L772.4 244.2 L774.0 244.3 L775.1 242.1 L776.2 244.3 L777.4 245.3 L778.4 243.5 L779.4 245.3 L781.4 245.8 L782.3 243.1 L783.1 245.8 L786.5 246.2 L787.4 244.1 L788.2 246.2 L791.7 246.5 L802.0 247.1 L809.6 247.4 L810.5 244.3 L811.4 247.4 L815.1 247.7 L816.3 244.7 L817.5 247.7 L821.0 247.9 L822.2 245.6 L823.5 247.9 L827.1 248.1 L836.2 248.3 L842.5 248.4 L846.1 248.5 L847.3 246.9 L848.5 248.5 L852.5 248.7 L853.3 245.3 L854.2 248.7 L856.0 248.8 L856.9 245.3 L857.9 248.8 L859.5 248.9 L860.4 246.6 L861.3 248.9 L862.5 249.0 L863.7 246.2 L864.8 249.0 L868.1 249.2 L868.9 245.6 L869.7 249.2 L872.6 249.3 L873.5 246.3 L874.4 249.3 L876.7 249.4 L877.6 247.9 L878.5 249.4 L880.6 249.5 L881.5 247.5 L882.5 249.5 L885.1 249.6 L886.2 247.3 L887.3 249.6 L890.8 249.8 L891.8 248.2 L892.8 249.8 L895.8 249.9 L897.0 247.7 L898.3 249.9 L900.5 250.1 L910.3 250.2 L911.4 247.9 L912.4 250.2 L914.3 250.2 L915.2 248.0 L916.2 250.2 L919.1 250.2 L920.1 247.6 L921.0 250.2 L924.2 250.2 L925.0 248.1 L925.8 250.2 L927.5 250.2 L928.6 247.9 L929.8 250.2 L930.9 250.2 L931.9 248.1 L932.9 250.2 L935.7 250.2 L941.2 250.2 L946.0 250.2 L951.0 250.2 L954.4 250.2 L955.7 248.5 L957.0 250.2 L958.7 250.2 L959.5 247.2 L960.3 250.2 L962.6 250.2 L963.8 248.5 L965.1 250.2 L967.1 250.2 L968.1 248.4 L969.1 250.2 L970.5 250.2 L971.7 247.4 L972.8 250.2 L974.9 250.2 L976.1 247.1 L977.3 250.2 L978.7 250.2 L979.6 248.1 L980.4 250.2 L982.9 250.2 L984.0 247.0 L985.1 250.2 L987.2 250.2 L988.3 248.2 L989.5 250.2 L992.2 250.2 L993.3 247.4 L994.4 250.2 L997.7 250.1 L998.8 247.6 L999.9 250.1 L1001.5 250.1 L1002.6 247.2 L1003.7 250.1 L1004.8 250.1 L1005.6 247.4 L1006.5 250.1 L1009.1 250.1 L1010.0 246.7 L1010.8 250.1 L1012.5 250.1 L1019.4 250.1 L1020.6 248.0 L1021.8 250.1 L1025.3 250.1 L1026.1 248.6 L1027.0 250.1 L1030.4 250.1 L1031.6 247.4 L1032.8 250.1 L1034.4 250.1 L1035.3 247.9 L1036.2 250.1 L1037.6 250.1 L1038.7 246.9 L1039.8 250.1 L1041.7 250.1 L1042.9 247.1 L1044.1 250.1 L1045.7 250.1 L1053.3 250.1 L1054.2 248.5 L1055.0 250.1 L1057.7 250.1 L1058.9 247.6 L1060.0 250.1 L1061.9 250.1 L1062.7 247.0 L1063.6 250.1 L1065.2 250.1 L1068.9 250.1 L1069.7 248.1 L1070.6 250.1 L1072.7 250.1 L1073.7 247.1 L1074.7 250.1 L1076.0 250.1 L1077.1 247.1 L1078.2 250.1 L1081.9 250.0 L1092.2 249.7 L1093.1 247.3 L1094.1 249.7 L1098.0 249.5 L1099.0 246.5 L1100.1 249.5 L1101.3 249.4 L1102.1 246.2 L1103.0 249.4 L1106.0 249.3 L1115.4 249.0 L1121.3 248.8 L1122.4 245.6 L1123.5 248.8 L1125.0 248.7 L1126.2 245.6 L1127.5 248.7 L1129.3 248.5 L1130.4 245.9 L1131.5 248.5 L1135.4 248.3 L1144.8 248.2 L1145.7 245.0 L1146.5 248.2 L1147.7 248.1 L1149.0 245.1 L1150.2 248.1 L1151.5 248.1 L1152.4 245.3 L1153.2 248.1 L1156.5 248.0 L1161.4 248.0 L1162.4 244.9 L1163.4 248.0 L1165.5 248.0 L1166.6 244.4 L1167.7 248.0 L1170.2 247.9 L1171.4 245.3 L1172.5 247.9 L1175.7 247.9 L1181.5 247.8" fill="none" stroke="#ff780a" stroke-opacity="0.9" stroke-width="1.5" stroke-linejoin="round"/></svg>
<div class="t" style="right:1529.5px;top:195.82px;font-size:13.5px;color:#ccccdc">2 GiB</div>
<div class="t" style="right:1529.5px;top:239.42px;font-size:13.5px;color:#ccccdc">1.50 GiB</div>
<div class="t" style="right:1529.5px;top:283.02px;font-size:13.5px;color:#ccccdc">1 GiB</div>
<div class="t" style="right:1529.5px;top:326.82px;font-size:13.5px;color:#ccccdc">512 MiB</div>
<div class="t" style="right:1529.5px;top:370.42px;font-size:13.5px;color:#ccccdc">0 B</div>
<div class="t" style="left:84.40px;width:80px;text-align:center;top:385.65px;font-size:14px;color:#ccccdc">12:00</div>
<div class="t" style="left:176.50px;width:80px;text-align:center;top:385.65px;font-size:14px;color:#ccccdc">14:00</div>
<div class="t" style="left:268.60px;width:80px;text-align:center;top:385.65px;font-size:14px;color:#ccccdc">16:00</div>
<div class="t" style="left:360.70px;width:80px;text-align:center;top:385.65px;font-size:14px;color:#ccccdc">18:00</div>
<div class="t" style="left:452.80px;width:80px;text-align:center;top:385.65px;font-size:14px;color:#ccccdc">20:00</div>
<div class="t" style="left:544.90px;width:80px;text-align:center;top:385.65px;font-size:14px;color:#ccccdc">22:00</div>
<div class="t" style="left:637.00px;width:80px;text-align:center;top:385.65px;font-size:14px;color:#ccccdc">00:00</div>
<div class="t" style="left:729.10px;width:80px;text-align:center;top:385.65px;font-size:14px;color:#ccccdc">02:00</div>
<div class="t" style="left:821.20px;width:80px;text-align:center;top:385.65px;font-size:14px;color:#ccccdc">04:00</div>
<div class="t" style="left:913.30px;width:80px;text-align:center;top:385.65px;font-size:14px;color:#ccccdc">06:00</div>
<div class="t" style="left:1005.40px;width:80px;text-align:center;top:385.65px;font-size:14px;color:#ccccdc">08:00</div>
<div class="t" style="left:1097.50px;width:80px;text-align:center;top:385.65px;font-size:14px;color:#ccccdc">10:00</div>
<div class="t" style="left:1220.6px;top:196.03px;font-size:12.6px;color:#6e9fff;font-weight:600;">Name</div>
<div class="t" style="right:22.5px;top:196.03px;font-size:12.6px;color:#6e9fff;font-weight:600">Last *</div>
<div class="a" style="left:1191px;top:213.5px;width:396px;height:1px;background:rgba(204,204,220,0.1)"></div>
<div class="a" style="left:1191px;top:237.5px;width:396px;height:1px;background:rgba(204,204,220,0.1)"></div>
<div class="a" style="left:1191px;top:261.0px;width:396px;height:1px;background:rgba(204,204,220,0.1)"></div>
<div class="a" style="left:1191px;top:284.7px;width:396px;height:1px;background:rgba(204,204,220,0.1)"></div>
<div class="a" style="left:1191px;top:308.2px;width:396px;height:1px;background:rgba(204,204,220,0.1)"></div>
<div class="a" style="left:1191px;top:331.7px;width:396px;height:1px;background:rgba(204,204,220,0.1)"></div>
<div class="a" style="left:1191px;top:355.8px;width:396px;height:1px;background:rgba(204,204,220,0.1)"></div>
<div class="a" style="left:1198.8px;top:223.20px;width:13.8px;height:4.6px;background:#73bf69;border-radius:2.3px"></div>
<div class="t" style="left:1220.6px;top:219.16px;font-size:13.4px;color:#ccccdc;font-weight:normal;">ai<span style="display:inline-block;transform:scaleX(1.3);margin:0 1.2px">-</span>agent<span style="display:inline-block;transform:scaleX(1.3);margin:0 1.2px">-</span>platform<span style="display:inline-block;transform:scaleX(1.3);margin:0 1.2px">-</span>backend <span style="display:inline-block;transform:scaleX(1.3);margin:0 1.2px">-</span> deployment</div>
<div class="t" style="right:21.25px;top:218.65px;font-size:14px;color:#ccccdc">1007 MiB</div>
<div class="a" style="left:1198.8px;top:247.00px;width:13.8px;height:4.6px;background:#fade2a;border-radius:2.3px"></div>
<div class="t" style="left:1220.6px;top:242.96px;font-size:13.4px;color:#ccccdc;font-weight:normal;">ai<span style="display:inline-block;transform:scaleX(1.3);margin:0 1.2px">-</span>agent<span style="display:inline-block;transform:scaleX(1.3);margin:0 1.2px">-</span>platform<span style="display:inline-block;transform:scaleX(1.3);margin:0 1.2px">-</span>runner<span style="display:inline-block;transform:scaleX(1.3);margin:0 1.2px">-</span>api <span style="display:inline-block;transform:scaleX(1.3);margin:0 1.2px">-</span> deployment</div>
<div class="t" style="right:21.25px;top:242.45px;font-size:14px;color:#ccccdc">1.73 GiB</div>
<div class="a" style="left:1198.8px;top:270.80px;width:13.8px;height:4.6px;background:#8ab8ff;border-radius:2.3px"></div>
<div class="t" style="left:1220.6px;top:266.76px;font-size:13.4px;color:#ccccdc;font-weight:normal;">ai<span style="display:inline-block;transform:scaleX(1.3);margin:0 1.2px">-</span>agent<span style="display:inline-block;transform:scaleX(1.3);margin:0 1.2px">-</span>platform<span style="display:inline-block;transform:scaleX(1.3);margin:0 1.2px">-</span>runner<span style="display:inline-block;transform:scaleX(1.3);margin:0 1.2px">-</span>flower <span style="display:inline-block;transform:scaleX(1.3);margin:0 1.2px">-</span> deployment</div>
<div class="t" style="right:21.25px;top:266.25px;font-size:14px;color:#ccccdc">56.7 MiB</div>
<div class="a" style="left:1198.8px;top:294.60px;width:13.8px;height:4.6px;background:#ff780a;border-radius:2.3px"></div>
<div class="t" style="left:1220.6px;top:290.56px;font-size:13.4px;color:#ccccdc;font-weight:normal;">ai<span style="display:inline-block;transform:scaleX(1.3);margin:0 1.2px">-</span>agent<span style="display:inline-block;transform:scaleX(1.3);margin:0 1.2px">-</span>platform<span style="display:inline-block;transform:scaleX(1.3);margin:0 1.2px">-</span>runner<span style="display:inline-block;transform:scaleX(1.3);margin:0 1.2px">-</span>worker <span style="display:inline-block;transform:scaleX(1.3);margin:0 1.2px">-</span> deployment</div>
<div class="t" style="right:21.25px;top:290.05px;font-size:14px;color:#ccccdc">1.48 GiB</div>
<div class="a" style="left:1199px;top:318.50px;width:6px;height:4.4px;background:#f2495c;border-radius:1px"></div>
<div class="a" style="left:1207px;top:318.50px;width:6px;height:4.4px;background:#f2495c;border-radius:1px"></div>
<div class="t" style="left:1220.6px;top:314.36px;font-size:13.4px;color:#ccccdc;font-weight:normal;">quota <span style="display:inline-block;transform:scaleX(1.3);margin:0 1.2px">-</span> requests</div>
<div class="a" style="left:1199px;top:342.30px;width:6px;height:4.4px;background:#ff9830;border-radius:1px"></div>
<div class="a" style="left:1207px;top:342.30px;width:6px;height:4.4px;background:#ff9830;border-radius:1px"></div>
<div class="t" style="left:1220.6px;top:338.16px;font-size:13.4px;color:#ccccdc;font-weight:normal;">quota <span style="display:inline-block;transform:scaleX(1.3);margin:0 1.2px">-</span> limits</div>
<div class="t" style="left:19.7px;top:425.3px;font-size:15px;color:#ccccdc;font-weight:600;">Memory Quota</div>
<svg style="left:137.8px;top:425.8px" width="15" height="15" viewBox="0 0 15 15">
<path d="M1.59 4.64 A6.3 6.3 0 0 1 13.59 6.97" fill="none" stroke="#9a9ba6" stroke-width="1.5"/>
<path d="M13.01 9.96 A6.3 6.3 0 0 1 1.01 7.63" fill="none" stroke="#9a9ba6" stroke-width="1.5"/>
<path d="M1.2 0.9 V5.0 H5.4" fill="none" stroke="#9a9ba6" stroke-width="1.5" stroke-linecap="round" stroke-linejoin="round"/>
<path d="M13.8 14.1 V10 H9.6" fill="none" stroke="#9a9ba6" stroke-width="1.5" stroke-linecap="round" stroke-linejoin="round"/>
<path d="M0.8 14 L13.8 1" stroke="#181b1f" stroke-width="3.6"/><path d="M0.8 14 L13.8 1" stroke="#9a9ba6" stroke-width="1.5" stroke-linecap="round"/>
</svg>
<div class="t" style="left:25.8px;top:464.11px;font-size:14.4px;color:#ccccdc;font-weight:600;letter-spacing:0.45px">Workload</div>
<div class="t" style="left:221.55px;top:464.11px;font-size:14.4px;color:#ccccdc;font-weight:600;letter-spacing:0.45px">Type</div>
<div class="t" style="right:1002.75px;top:464.11px;font-size:14.4px;color:#ccccdc;font-weight:600;letter-spacing:0.45px">Running Pods</div>
<div class="t" style="right:807.00px;top:464.11px;font-size:14.4px;color:#ccccdc;font-weight:600;letter-spacing:0.45px">Memory Usage</div>
<div class="t" style="right:611.25px;top:464.11px;font-size:14.4px;color:#ccccdc;font-weight:600;letter-spacing:0.45px">Memory Requests</div>
<div class="t" style="right:415.50px;top:464.11px;font-size:14.4px;color:#ccccdc;font-weight:600;letter-spacing:0.45px">Memory Requests %</div>
<div class="t" style="right:219.75px;top:464.11px;font-size:14.4px;color:#ccccdc;font-weight:600;letter-spacing:0.45px">Memory Limits</div>
<div class="t" style="right:24.00px;top:464.11px;font-size:14.4px;color:#ccccdc;font-weight:600;letter-spacing:0.45px">Memory Limits %</div>
<div class="a" style="left:20px;top:485.3px;width:1566.5px;height:1px;background:rgba(204,204,220,0.12)"></div>
<div class="a" style="left:20px;top:521.6px;width:1566.5px;height:1px;background:rgba(204,204,220,0.12)"></div>
<div class="a" style="left:20px;top:557.7px;width:1566.5px;height:1px;background:rgba(204,204,220,0.12)"></div>
<div class="a" style="left:20px;top:593.9px;width:1566.5px;height:1px;background:rgba(204,204,220,0.12)"></div>
<div class="a" style="left:215.25px;top:486px;width:1px;height:143px;background:rgba(204,204,220,0.12)"></div>
<div class="a" style="left:411.00px;top:486px;width:1px;height:143px;background:rgba(204,204,220,0.12)"></div>
<div class="a" style="left:606.75px;top:486px;width:1px;height:143px;background:rgba(204,204,220,0.12)"></div>
<div class="a" style="left:802.50px;top:486px;width:1px;height:143px;background:rgba(204,204,220,0.12)"></div>
<div class="a" style="left:998.25px;top:486px;width:1px;height:143px;background:rgba(204,204,220,0.12)"></div>
<div class="a" style="left:1194.00px;top:486px;width:1px;height:143px;background:rgba(204,204,220,0.12)"></div>
<div class="a" style="left:1389.75px;top:486px;width:1px;height:143px;background:rgba(204,204,220,0.12)"></div>
<div class="a" style="left:20px;top:658px;width:1566.5px;height:1px;background:rgba(204,204,220,0.08)"></div>
<div class="t" style="left:25.8px;top:494.7px;font-size:15px;color:#6e9fff;font-weight:normal;">ai<span style="display:inline-block;transform:scaleX(1.3);margin:0 2.2px">-</span>agent<span style="display:inline-block;transform:scaleX(1.3);margin:0 2.2px">-</span>platform<span style="display:inline-block;transform:scaleX(1.3);margin:0 2.2px">-</span>b<span style="letter-spacing:1.5px">...</span></div>
<div class="t" style="left:221.55px;top:494.7px;font-size:15px;color:#ccccdc;font-weight:normal;">deployment</div>
<div class="t" style="right:999.55px;top:494.70px;font-size:15px;color:#ccccdc">1</div>
<div class="t" style="right:803.80px;top:494.70px;font-size:15px;color:#ccccdc">1007 MiB</div>
<div class="t" style="right:608.05px;top:494.70px;font-size:15px;color:#ccccdc">1 GiB</div>
<div class="t" style="right:412.30px;top:494.70px;font-size:15px;color:#ccccdc">98.3%</div>
<div class="t" style="right:216.55px;top:494.70px;font-size:15px;color:#ccccdc">1.50 GiB</div>
<div class="t" style="right:20.80px;top:494.70px;font-size:15px;color:#ccccdc">65.5%</div>
<div class="t" style="left:25.8px;top:530.9px;font-size:15px;color:#6e9fff;font-weight:normal;">ai<span style="display:inline-block;transform:scaleX(1.3);margin:0 2.2px">-</span>agent<span style="display:inline-block;transform:scaleX(1.3);margin:0 2.2px">-</span>platform<span style="display:inline-block;transform:scaleX(1.3);margin:0 2.2px">-</span>r<span style="letter-spacing:1.5px">...</span></div>
<div class="t" style="left:221.55px;top:530.9px;font-size:15px;color:#ccccdc;font-weight:normal;">deployment</div>
<div class="t" style="right:999.55px;top:530.90px;font-size:15px;color:#ccccdc">1</div>
<div class="t" style="right:803.80px;top:530.90px;font-size:15px;color:#ccccdc">1.73 GiB</div>
<div class="t" style="right:608.05px;top:530.90px;font-size:15px;color:#ccccdc">2.33 GiB</div>
<div class="t" style="right:412.30px;top:530.90px;font-size:15px;color:#ccccdc">74.4%</div>
<div class="t" style="right:216.55px;top:530.90px;font-size:15px;color:#ccccdc">3.45 GiB</div>
<div class="t" style="right:20.80px;top:530.90px;font-size:15px;color:#ccccdc">50.2%</div>
<div class="t" style="left:25.8px;top:567.1px;font-size:15px;color:#6e9fff;font-weight:normal;">ai<span style="display:inline-block;transform:scaleX(1.3);margin:0 2.2px">-</span>agent<span style="display:inline-block;transform:scaleX(1.3);margin:0 2.2px">-</span>platform<span style="display:inline-block;transform:scaleX(1.3);margin:0 2.2px">-</span>r<span style="letter-spacing:1.5px">...</span></div>
<div class="t" style="left:221.55px;top:567.1px;font-size:15px;color:#ccccdc;font-weight:normal;">deployment</div>
<div class="t" style="right:999.55px;top:567.10px;font-size:15px;color:#ccccdc">1</div>
<div class="t" style="right:803.80px;top:567.10px;font-size:15px;color:#ccccdc">56.7 MiB</div>
<div class="t" style="right:608.05px;top:567.10px;font-size:15px;color:#ccccdc">61.0 MiB</div>
<div class="t" style="right:412.30px;top:567.10px;font-size:15px;color:#ccccdc">92.9%</div>
<div class="t" style="right:216.55px;top:567.10px;font-size:15px;color:#ccccdc">91.6 MiB</div>
<div class="t" style="right:20.80px;top:567.10px;font-size:15px;color:#ccccdc">61.9%</div>
<div class="t" style="left:25.8px;top:603.3px;font-size:15px;color:#6e9fff;font-weight:normal;">ai<span style="display:inline-block;transform:scaleX(1.3);margin:0 2.2px">-</span>agent<span style="display:inline-block;transform:scaleX(1.3);margin:0 2.2px">-</span>platform<span style="display:inline-block;transform:scaleX(1.3);margin:0 2.2px">-</span>r<span style="letter-spacing:1.5px">...</span></div>
<div class="t" style="left:221.55px;top:603.3px;font-size:15px;color:#ccccdc;font-weight:normal;">deployment</div>
<div class="t" style="right:999.55px;top:603.30px;font-size:15px;color:#ccccdc">1</div>
<div class="t" style="right:803.80px;top:603.30px;font-size:15px;color:#ccccdc">1.48 GiB</div>
<div class="t" style="right:608.05px;top:603.30px;font-size:15px;color:#ccccdc">1.50 GiB</div>
<div class="t" style="right:412.30px;top:603.30px;font-size:15px;color:#ccccdc">98.5%</div>
<div class="t" style="right:216.55px;top:603.30px;font-size:15px;color:#ccccdc">2 GiB</div>
<div class="t" style="right:20.80px;top:603.30px;font-size:15px;color:#ccccdc">73.9%</div>
<div class="orange" style="left:1.6px;top:135.2px;width:1593.6px;height:288.4px"></div>
<div class="orange" style="left:1218.5px;top:436.2px;width:207.4px;height:208.5px"></div>
</body></html>
